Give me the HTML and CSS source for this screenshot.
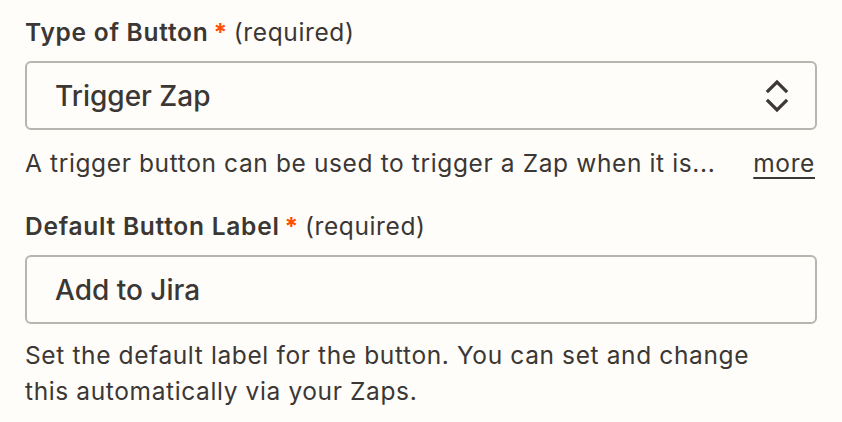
FILE: index.html
```html
<!DOCTYPE html>
<html>
<head>
<meta charset="utf-8">
<link rel="stylesheet" href="styles.css">
</head>
<body>
<div class="form">
  <div class="field">
    <div class="label"><span class="name">Type of Button</span><span class="star">*</span><span class="req">(required)</span></div>
    <div class="box select">
      <span class="value">Trigger Zap</span>
      <svg class="chev" width="24" height="34" viewBox="0 0 24 34" fill="none" stroke="#3d3937" stroke-width="3.2" stroke-linecap="square" stroke-linejoin="miter">
        <path d="M3 12 L12 3 L21 12"/>
        <path d="M3 22 L12 31 L21 22"/>
      </svg>
    </div>
    <div class="help row"><span>A trigger button can be used to trigger a Zap when it is...</span><a class="more">more</a></div>
  </div>
  <div class="field second">
    <div class="label"><span class="name">Default Button Label</span><span class="star">*</span><span class="req">(required)</span></div>
    <div class="box">
      <span class="value">Add to Jira</span>
    </div>
    <div class="help help2">Set the default label for the button. You can set and change this automatically via your Zaps.</div>
  </div>
</div>
</body>
</html>
```
FILE: styles.css
```css
html, body {
  margin: 0;
  padding: 0;
  background: #fffdf9;
}
body {
  font-family: Inter, "Noto Sans", sans-serif;
  color: #3b3735;
  font-size: 24.5px;
  line-height: 36px;
  letter-spacing: 0.62px;
}
.form {
  width: 792px;
  padding: 14px 0 0 25px;
}
.label {
  display: flex;
  align-items: baseline;
}
.name {
  font-weight: 600;
  letter-spacing: 0.75px;
}
.star {
  color: #ff4f00;
  font-weight: 700;
  margin-left: 5px;
  margin-right: 6px;
}
.box {
  margin-top: 11px;
  height: 69px;
  box-sizing: border-box;
  border: 2px solid #b7b5af;
  border-radius: 6px;
  display: flex;
  align-items: center;
  justify-content: space-between;
  padding: 0 26px 0 28px;
}
.value {
  font-size: 28px;
  font-weight: 500;
  letter-spacing: 0;
}
.help {
  margin-top: 15px;
}
.row {
  display: flex;
  justify-content: space-between;
}
.more {
  text-decoration: underline;
  text-underline-offset: 5px;
  text-decoration-thickness: 2px;
  margin-right: 2px;
}
.second {
  margin-top: 27px;
}
.help2 {
  margin-top: 13px;
  max-width: 770px;
}
```
